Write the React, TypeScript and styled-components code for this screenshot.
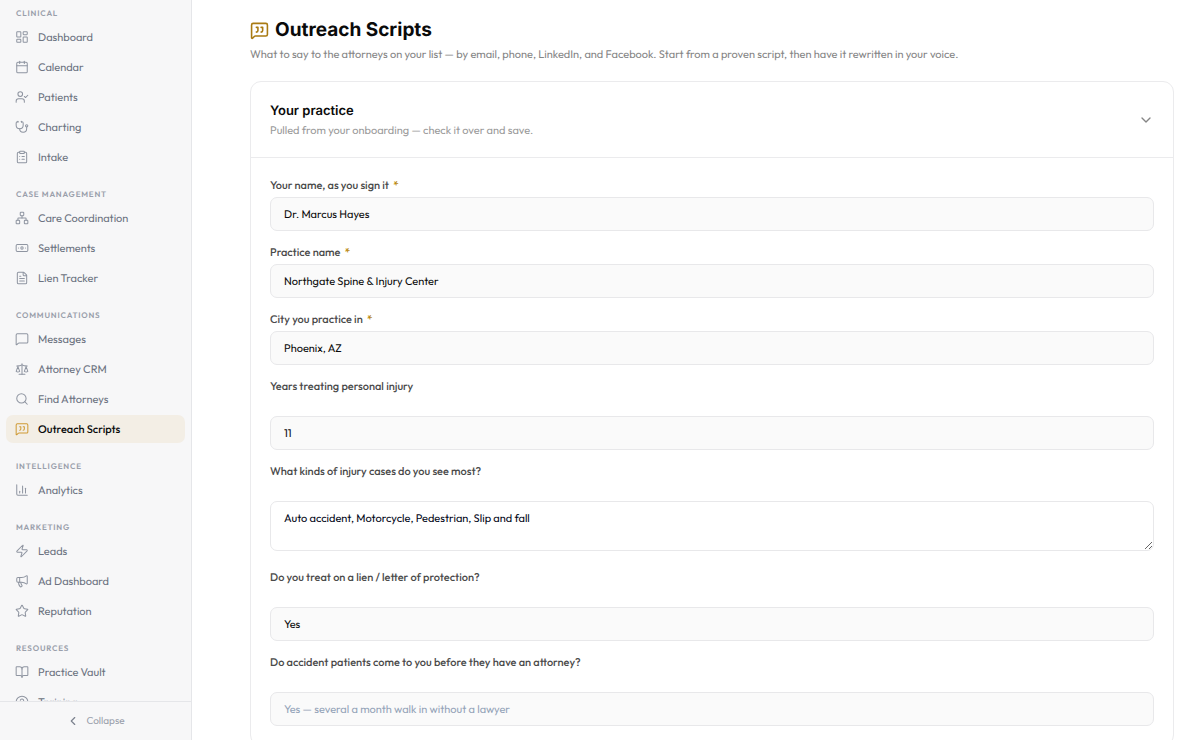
import React, { useState } from 'react';
import styled, { createGlobalStyle, css } from 'styled-components';
import {
  LayoutDashboard, Calendar, UserCheck, Stethoscope, ClipboardList, Network, Banknote, FileText,
  MessageSquare, Scale, Search, MessageSquareQuote, ChartColumn, Zap, Megaphone, Star, BookOpen,
  CircleQuestionMark, ChevronLeft, ChevronDown, type LucideIcon,
} from 'lucide-react';

const GlobalStyle = createGlobalStyle`
  *, *::before, *::after { box-sizing: border-box; }
  body {
    margin: 0;
    background: #fff;
    color: #0a0a0a;
    font-family: Outfit, Lato, sans-serif;
    font-size: 11px;
    line-height: 16px;
    text-rendering: geometricPrecision;
  }
  button, input, textarea { font: inherit; text-rendering: inherit; }
`;

const Shell = styled.div`
  display: flex;
  height: 100vh;
  overflow: hidden;
`;

const Sidebar = styled.aside`
  display: flex;
  flex-direction: column;
  flex: none;
  width: 192px;
  background: #f7f7f8;
  border-right: 1px solid #e5e6e9;
`;

const Nav = styled.nav`
  display: flex;
  flex-direction: column;
  flex: 1;
  gap: 17px;
  min-height: 0;
  padding: 7px 6px 0;
  overflow: hidden;
`;

const Group = styled.section`
  flex: none;
`;

const GroupTitle = styled.h2`
  margin: 0 0 2px;
  padding-left: 10px;
  color: #9a9fab;
  font-size: 8px;
  font-weight: 600;
  line-height: 14px;
  letter-spacing: 0.1em;
  text-transform: uppercase;
`;

const NavList = styled.ul`
  display: flex;
  flex-direction: column;
  gap: 2px;
  margin: 0;
  padding: 0;
  list-style: none;
`;

const NavLink = styled.a<{ $active?: boolean }>`
  display: flex;
  align-items: center;
  gap: 9px;
  height: 28px;
  padding: 0 9px;
  border-radius: 7px;
  color: #6b7280;
  text-decoration: none;

  svg { flex: none; color: #8f95a1; }

  ${({ $active }) => $active && css`
    background: #f3eee5;
    color: #0a0a0a;
    font-weight: 500;
    svg { color: #cf9a35; }
  `}
`;

const SidebarFooter = styled.div`
  flex: none;
  border-top: 1px solid #e5e6e9;
`;

const CollapseButton = styled.button`
  display: flex;
  align-items: center;
  justify-content: center;
  gap: 6px;
  width: 100%;
  height: 38px;
  padding: 0;
  border: 0;
  background: none;
  color: #9a9fab;
  font-size: 10px;

  svg { color: #7c828e; }
`;

const Main = styled.main`
  flex: 1;
  min-width: 0;
  padding: 16px 26px 0 58px;
  overflow: hidden;
`;

const PageTitle = styled.h1`
  display: flex;
  align-items: center;
  gap: 6px;
  margin: 0;
  font-family: Inter, sans-serif;
  font-size: 19px;
  font-weight: 700;
  line-height: 28px;

  svg { color: #a97a12; }
`;

const Lead = styled.p`
  margin: 2px 0 19px;
  color: #858585;
`;

const Card = styled.section`
  border: 1px solid #ebebed;
  border-radius: 11px;
`;

const CardHeader = styled.button`
  display: flex;
  align-items: center;
  justify-content: space-between;
  width: 100%;
  height: 76px;
  padding: 0 19px;
  border: 0;
  border-bottom: 1px solid #ebebed;
  background: none;
  text-align: left;
  color: #858585;
`;

const CardTitle = styled.span`
  display: block;
  margin-bottom: 2px;
  color: #0a0a0a;
  font-family: Inter, sans-serif;
  font-size: 13px;
  font-weight: 600;
  line-height: 18px;
`;

const CardNote = styled.span`
  display: block;
  color: #9a9a9a;
`;

const Form = styled.form`
  display: flex;
  flex-direction: column;
  gap: 13px;
  padding: 19px;
`;

const Field = styled.div<{ $spaced: boolean }>`
  display: flex;
  flex-direction: column;
  gap: ${({ $spaced }) => ($spaced ? '22px' : '4px')};
`;

const Label = styled.label`
  color: #4a4a4a;
  font-weight: 500;
`;

const Required = styled.span`
  margin-left: 2px;
  color: #b8860b;
`;

const control = css`
  display: block;
  width: 100%;
  padding: 8px 13px;
  border: 1px solid #e8e8ea;
  border-radius: 7px;
  outline: none;
`;

const TextInput = styled.input`
  ${control}
  height: 34px;
  background: #fafafa;
  color: #0a0a0a;
  &::placeholder { color: #94a3b8; opacity: 1; }
`;

const TextArea = styled.textarea`
  ${control}
  height: 50px;
  margin-bottom: 5px;
  background: #fff;
  color: #020617;
  resize: vertical;
`;

type Item = { label: string; icon: LucideIcon };

const groups: { title: string; items: Item[] }[] = [
  { title: 'Clinical', items: [
    { label: 'Dashboard', icon: LayoutDashboard },
    { label: 'Calendar', icon: Calendar },
    { label: 'Patients', icon: UserCheck },
    { label: 'Charting', icon: Stethoscope },
    { label: 'Intake', icon: ClipboardList },
  ] },
  { title: 'Case Management', items: [
    { label: 'Care Coordination', icon: Network },
    { label: 'Settlements', icon: Banknote },
    { label: 'Lien Tracker', icon: FileText },
  ] },
  { title: 'Communications', items: [
    { label: 'Messages', icon: MessageSquare },
    { label: 'Attorney CRM', icon: Scale },
    { label: 'Find Attorneys', icon: Search },
    { label: 'Outreach Scripts', icon: MessageSquareQuote },
  ] },
  { title: 'Intelligence', items: [{ label: 'Analytics', icon: ChartColumn }] },
  { title: 'Marketing', items: [
    { label: 'Leads', icon: Zap },
    { label: 'Ad Dashboard', icon: Megaphone },
    { label: 'Reputation', icon: Star },
  ] },
  { title: 'Resources', items: [
    { label: 'Practice Vault', icon: BookOpen },
    { label: 'Training', icon: CircleQuestionMark },
  ] },
];

type Question = {
  id: string; label: string; value?: string; placeholder?: string; required?: boolean; multiline?: boolean;
};

const questions: Question[] = [
  { id: 'name', label: 'Your name, as you sign it', value: 'Dr. Marcus Hayes', required: true },
  { id: 'practice', label: 'Practice name', value: 'Northgate Spine & Injury Center', required: true },
  { id: 'city', label: 'City you practice in', value: 'Phoenix, AZ', required: true },
  { id: 'years', label: 'Years treating personal injury', value: '11' },
  { id: 'cases', label: 'What kinds of injury cases do you see most?', value: 'Auto accident, Motorcycle, Pedestrian, Slip and fall', multiline: true },
  { id: 'lien', label: 'Do you treat on a lien / letter of protection?', value: 'Yes' },
  { id: 'walkins', label: 'Do accident patients come to you before they have an attorney?', placeholder: 'Yes — several a month walk in without a lawyer' },
];

export default function App() {
  const [open, setOpen] = useState(true);
  return (
    <>
      <GlobalStyle />
      <Shell>
        <Sidebar>
          <Nav>
            {groups.map(({ title, items }) => (
              <Group key={title}>
                <GroupTitle>{title}</GroupTitle>
                <NavList>
                  {items.map(({ label, icon: Icon }) => (
                    <li key={label}>
                      <NavLink href="#" $active={label === 'Outreach Scripts'}>
                        <Icon size={14} strokeWidth={1.75} />
                        {label}
                      </NavLink>
                    </li>
                  ))}
                </NavList>
              </Group>
            ))}
          </Nav>
          <SidebarFooter>
            <CollapseButton type="button">
              <ChevronLeft size={14} />
              Collapse
            </CollapseButton>
          </SidebarFooter>
        </Sidebar>
        <Main>
          <PageTitle>
            <MessageSquareQuote size={19} />
            Outreach Scripts
          </PageTitle>
          <Lead>
            What to say to the attorneys on your list — by email, phone, LinkedIn, and Facebook. Start from a proven
            script, then have it rewritten in your voice.
          </Lead>
          <Card>
            <CardHeader type="button" aria-expanded={open} onClick={() => setOpen(!open)}>
              <span>
                <CardTitle>Your practice</CardTitle>
                <CardNote>Pulled from your onboarding — check it over and save.</CardNote>
              </span>
              <ChevronDown size={16} />
            </CardHeader>
            {open && (
              <Form>
                {questions.map(({ id, label, value, placeholder, required, multiline }) => (
                  <Field key={id} $spaced={!required}>
                    <Label htmlFor={id}>
                      {label} {required && <Required>*</Required>}
                    </Label>
                    {multiline
                      ? <TextArea id={id} defaultValue={value} />
                      : <TextInput id={id} defaultValue={value} placeholder={placeholder} />}
                  </Field>
                ))}
              </Form>
            )}
          </Card>
        </Main>
      </Shell>
    </>
  );
}
